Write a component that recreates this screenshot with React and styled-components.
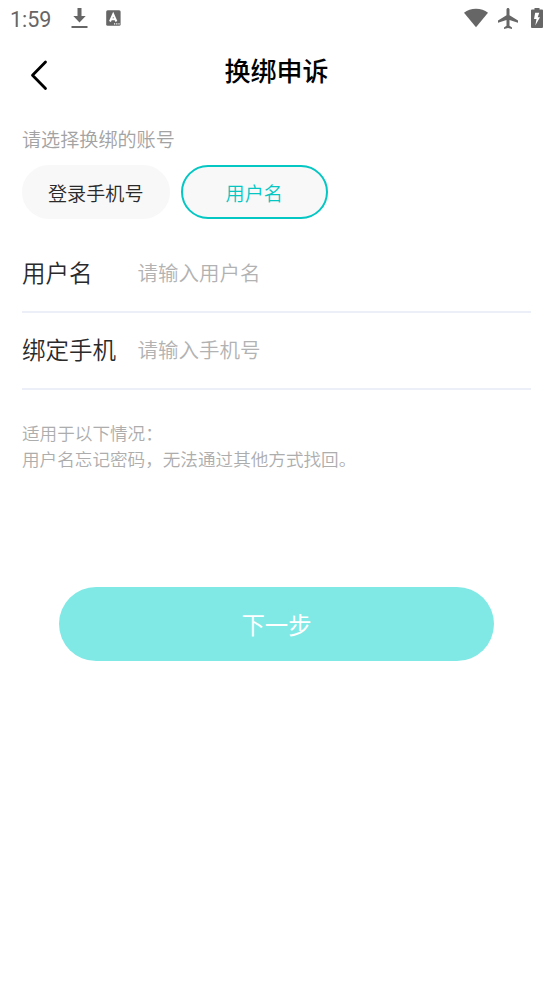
import React from "react";
import styled, { createGlobalStyle } from "styled-components";

const GlobalStyle = createGlobalStyle`
  * { box-sizing: border-box; }
  html, body { margin: 0; background: #fff; }
  body, button, input { font-family: "Noto Sans CJK SC", sans-serif; font-weight: 350; }
`;

const Screen = styled.main`
  display: flex;
  flex-direction: column;
  width: 553px;
  height: 983px;
  background: #fff;
  overflow: hidden;
`;

const StatusBar = styled.div`
  display: flex;
  align-items: center;
  justify-content: space-between;
  height: 38px;
  padding: 0 10px 0 10px;
  color: #666;
`;

const StatusGroup = styled.div`
  display: flex;
  align-items: center;
`;

const Clock = styled.span`
  width: 61px;
  padding-top: 1px;
  font: 400 21.5px/37px Roboto, sans-serif;
`;

const StatusIcon = styled.svg`
  display: block;
  flex: none;
  margin: 0 0 2px ${(p) => p.$gap || 0}px;
`;

const Header = styled.header`
  display: grid;
  grid-template-columns: 48px 1fr 48px;
  height: 66px;
  padding: 0 14px;
`;

const BackButton = styled.button`
  display: flex;
  align-items: flex-start;
  padding: 22px 0 0 15px;
  border: 0;
  background: none;
`;

const Title = styled.h1`
  margin: 0;
  font-size: 26px;
  line-height: 64px;
  font-weight: 500;
  text-align: center;
  color: #000;
`;

const Content = styled.section`
  display: flex;
  flex-direction: column;
  padding: 20px 22px 0;
`;

const Prompt = styled.p`
  margin: 0;
  font-size: 19.1px;
  line-height: 30px;
  color: #a3a3a3;
`;

const Options = styled.div`
  display: flex;
  gap: 11px;
  margin-top: 11px;
`;

const Option = styled.button`
  width: 147.5px;
  height: 54px;
  padding: 1px 0 0;
  border: 2px solid ${(p) => (p.$active ? "#04c6c3" : "#f8f8f8")};
  border-radius: 27px;
  background: #f8f8f8;
  font-size: 19.1px;
  color: ${(p) => (p.$active ? "#04c6c3" : "#2a2a2a")};
`;

const Fields = styled.div`
  display: flex;
  flex-direction: column;
  width: 509px;
  margin-top: 17px;
`;

const Field = styled.label`
  display: flex;
  align-items: center;
  height: 77px;
  padding-bottom: 4px;
  border-bottom: 2px solid #eceff8;
`;

const FieldName = styled.span`
  width: 115.5px;
  font-size: 23.5px;
  line-height: 34px;
  color: #2a2a2a;
`;

const FieldInput = styled.input`
  flex: 1;
  min-width: 0;
  padding: 0;
  border: 0;
  outline: 0;
  background: transparent;
  font-size: 20.5px;
  line-height: 30px;
  color: #2a2a2a;
  &::placeholder { color: #b2b2b2; opacity: 1; }
`;

const Notes = styled.div`
  margin-top: 30px;
  font-size: 17.6px;
  line-height: 26px;
  color: #adadad;
  white-space: nowrap;
`;

const NextButton = styled.button`
  align-self: center;
  width: 435px;
  height: 74px;
  margin-top: 115px;
  padding: 0;
  border: 0;
  border-radius: 37px;
  background: #80e9e6;
  font-size: 23.4px;
  font-weight: 400;
  color: #fff;
`;

export default function App() {
  return (
    <Screen>
      <GlobalStyle />
      <StatusBar>
        <StatusGroup>
          <Clock>1:59</Clock>
          <StatusIcon width="17" height="22" viewBox="0 0 17 22" fill="currentColor">
            <path d="M6.500 1h4v8h4.200L8.500 15.400 2.300 9h4.200zM.5 19h16v2H.5z" />
          </StatusIcon>
          <StatusIcon $gap={18} width="15" height="16" viewBox="0 0 15 16" fill="currentColor">
            <rect x="0.2" y="0.2" width="14.4" height="15.6" rx="1.5" />
            <path d="M4 11.500 7.200 4.200 10.400 11.500M5 9.200h4.400" fill="none" stroke="#fff" strokeWidth="2" />
            <path d="M8 13.300h1.200v1.200H8zm2.200 0h1.200v1.200h-1.200zm2.200 0h1.200v1.200h-1.200z" fill="#fff" />
          </StatusIcon>
        </StatusGroup>
        <StatusGroup>
          <StatusIcon width="24" height="20" viewBox="0 0 24 20" fill="currentColor">
            <path d="M0 4.700C3.300 2.100 7.400 .7 12 .7s8.700 1.400 12 4L12 19.200z" />
          </StatusIcon>
          <StatusIcon $gap={10} width="20" height="21" viewBox="2 2 20 20" preserveAspectRatio="none" fill="currentColor">
            <path d="M22 16v-2l-8.500-5V3.500C13.500 2.670 12.830 2 12 2s-1.500.670-1.500 1.500V9L2 14v2l8.500-2.500V19L8 20.500V22l4-1 4 1v-1.500L13.500 19v-5.500z" />
          </StatusIcon>
          <StatusIcon $gap={13} width="12" height="20" viewBox="0 0 12 20" fill="currentColor">
            <path d="M3.500 0h5v1.500H11Q12 1.500 12 2.500v16.500Q12 20 11 20H1Q0 20 0 19V2.500Q0 1.500 1 1.500h2.500z" />
            <path d="M8.300 4.800H4.200L3 11h2.500L4.300 17.500 9 9.300H6.700z" fill="#fff" />
          </StatusIcon>
        </StatusGroup>
      </StatusBar>
      <Header>
        <BackButton aria-label="返回">
          <svg width="20" height="31" viewBox="0 0 20 31" fill="none" stroke="#000" strokeWidth="2.800" strokeLinecap="round" strokeLinejoin="round">
            <path d="M16.500 2 3.500 15.300 16.500 28.600" />
          </svg>
        </BackButton>
        <Title>换绑申诉</Title>
      </Header>
      <Content>
        <Prompt>请选择换绑的账号</Prompt>
        <Options>
          <Option>登录手机号</Option>
          <Option $active>用户名</Option>
        </Options>
        <Fields>
          <Field>
            <FieldName>用户名</FieldName>
            <FieldInput placeholder="请输入用户名" />
          </Field>
          <Field>
            <FieldName>绑定手机</FieldName>
            <FieldInput placeholder="请输入手机号" />
          </Field>
        </Fields>
        <Notes>
          <div>适用于以下情况：</div>
          <div>用户名忘记密码，无法通过其他方式找回。</div>
        </Notes>
        <NextButton>下一步</NextButton>
      </Content>
    </Screen>
  );
}
